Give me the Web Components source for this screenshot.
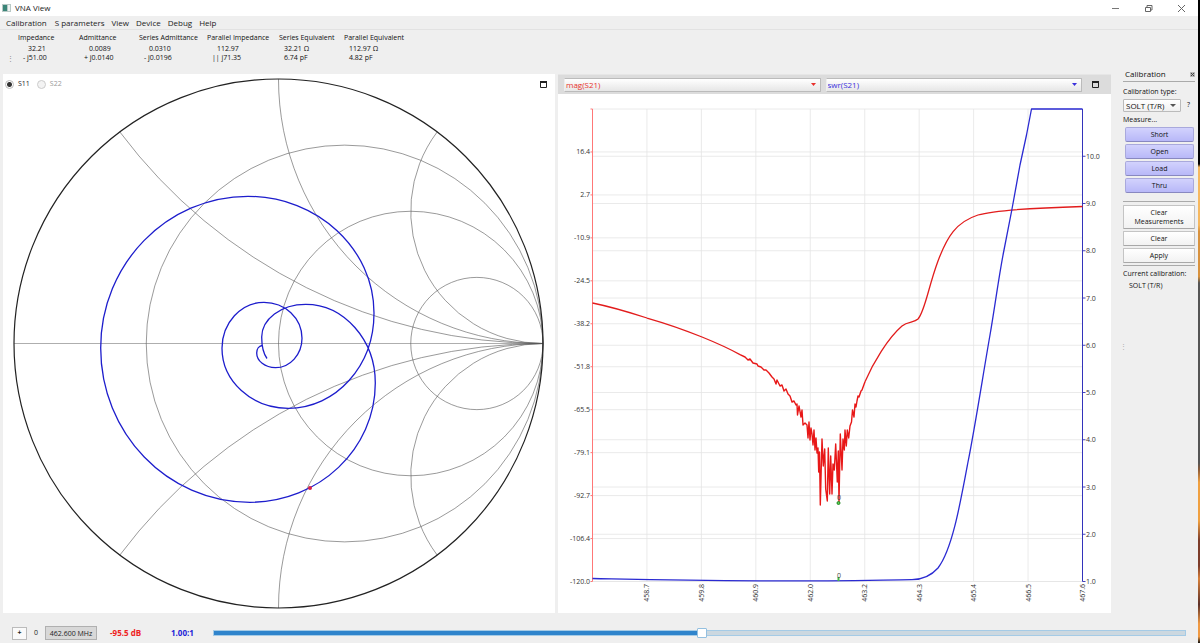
<!DOCTYPE html>
<html lang="en">
<head>
<meta charset="utf-8">
<title>VNA View</title>
<style>
  body { margin: 0; background: #efefef; }
</style>
</head>
<body>
<vna-app></vna-app>
<script>
const BASE = `
  *, *::before, *::after { box-sizing: border-box; }
  :host { display: block; }
  button, input, select { font: inherit; color: inherit; margin: 0; }
  button { padding: 0; border: 0; background: none; white-space: nowrap; }
  svg { display: block; }
`;

function define(name, css, html) {
  customElements.define(name, class extends HTMLElement {
    constructor() {
      super();
      const root = this.attachShadow({ mode: 'open' });
      const t = document.createElement('template');
      t.innerHTML = `<style>${BASE}${css}</style>${html}`;
      root.append(t.content.cloneNode(true));
    }
  });
}

/* ---------- title bar ---------- */
define('vna-titlebar', `
  :host { background: #fff; height: 16px; display: flex; align-items: center; padding-left: 2px; color: #222; }
  h1 { font-size: 8px; line-height: 16px; font-weight: 400; margin: 0 auto 0 4px; }
  button { width: 33px; height: 16px; display: grid; place-items: center; }
`, `
  <svg width="9" height="8" viewBox="0 0 9 8" aria-hidden="true">
    <rect width="9" height="8" fill="#b9c9c6"/><rect x="1" y="1" width="4" height="6" fill="#3b8578"/>
    <rect x="6" y="1" width="2" height="6" fill="#eef3f2"/></svg>
  <h1>VNA View</h1>
  <button aria-label="Minimize"><svg width="9" height="9"><path d="M1 4.5H8" stroke="#777"/></svg></button>
  <button aria-label="Restore"><svg width="9" height="9" fill="none" stroke="#666"><path d="M1.5 3.5h5v4h-5zM3 3.5v-2h5v4.5h-1.5"/></svg></button>
  <button aria-label="Close"><svg width="9" height="9" fill="none" stroke="#666"><path d="M1 1l7 7M8 1l-7 7"/></svg></button>
`);

/* ---------- menu bar ---------- */
define('vna-menubar', `
  nav { display: flex; gap: 8px; height: 14px; padding: 0 6px; border-bottom: 1px solid #e2e2e2; font-size: 8px; line-height: 14px; color: #222; }
  button:nth-child(n+3) { margin-left: -1px; }
`, `<nav aria-label="Main menu">${['Calibration', 'S parameters', 'View', 'Device', 'Debug', 'Help'].map(m => `<button>${m}</button>`).join('')}</nav>`);

/* ---------- marker readout ---------- */
const READOUT = [
  ['Impedance', '32.21', '- j51.00', 61], ['Admittance', '0.0089', '+ j0.0140', 60],
  ['Series Admittance', '0.0310', '- j0.0196', 68], ['Parallel Impedance', '112.97', '|| j71.35', 72],
  ['Series Equivalent', '32.21 Ω', '6.74 pF', 65], ['Parallel Equivalent', '112.97 Ω', '4.82 pF', 70]];
define('vna-readout', `
  :host { height: 44px; padding: 3px 0 0 7px; display: flex; align-items: flex-start; color: #111; }
  .grip { width: 11px; font-size: 7px; line-height: 9px; padding-top: 21px; color: #888; }
  table { border-collapse: collapse; table-layout: fixed; width: 396px; font-size: 7px; line-height: 9px; }
  th, td { padding: 0; text-align: left; font-weight: 400; white-space: nowrap; }
  th { height: 11px; vertical-align: top; }
  td { padding-left: 5px; }
  tr.real td:nth-child(-n+4) { padding-left: 10px; }
`, `<span class="grip" aria-hidden="true">⋮</span>
  <table><colgroup>${READOUT.map(r => `<col style="width:${r[3]}px">`).join('')}</colgroup>
  <thead><tr>${READOUT.map(r => `<th scope="col">${r[0]}</th>`).join('')}</tr></thead>
  <tbody><tr class="real">${READOUT.map(r => `<td>${r[1]}</td>`).join('')}</tr>
  <tr>${READOUT.map(r => `<td>${r[2]}</td>`).join('')}</tr></tbody></table>`);

/* ---------- Smith chart ---------- */
function smithGrid() {
  const cx = 278.5, cy = 343.5, R = 264.5, end = cx + R;
  let s = `<path d="M${cx - R} ${cy}H${end}" stroke="#777"/>`;
  for (const r of [1 / 3, 1, 3])
    s += `<circle cx="${cx + R * r / (1 + r)}" cy="${cy}" r="${R / (1 + r)}"/>`;
  for (const x of [0.5, 1, 2]) {
    const d = x * x + 1, px = cx + R * (x * x - 1) / d, py = R * 2 * x / d, rad = R / x;
    s += `<path d="M${px} ${cy - py}A${rad} ${rad} 0 0 0 ${end} ${cy}"/><path d="M${px} ${cy + py}A${rad} ${rad} 0 0 1 ${end} ${cy}"/>`;
  }
  return `<g fill="none" stroke="#555" stroke-width=".6">${s}</g>
    <circle cx="${cx}" cy="${cy}" r="${R}" fill="none" stroke="#222" stroke-width="1.2"/>`;
}
define('smith-chart', `
  :host { background: #fff; display: grid; align-content: start; min-width: 0; }
  svg.chart, .bar { grid-area: 1 / 1; }
  svg.chart { width: 100%; height: auto; }
  .bar { display: flex; align-items: center; height: 20px; padding: 0 6px 0 2px; align-self: start; font-size: 7px; line-height: 10px; }
  label { display: flex; align-items: center; gap: 4px; margin-right: 7px; color: #222; }
  label.off { color: #999; }
  input { appearance: none; width: 9px; height: 9px; border: 1px solid #bbb; border-radius: 50%; background: #fff; }
  input:checked { background: radial-gradient(circle, #333 0 2px, #fff 3px); }
  input:disabled { background: #f3f3f3; border-color: #ccc; }
  button { margin-left: auto; width: 11px; height: 11px; display: grid; place-items: center; }
`, `
  <svg class="chart" viewBox="3 74 552 539" role="img" aria-label="Smith chart of S11">
    ${smithGrid()}
    <path fill="none" stroke="#1d1dcc" stroke-width="1.3" d="M267 358.5C263 353 261.7 345 261.7 337C261.7 319 281 304.3 305.7 304.3C344 304.3 375.3 340 375.3 383C375.3 449 319 502.3 250 502.3C167 502.3 100.7 433 100.7 348C100.7 264 167 196.3 248 196.3C317.5 196.3 374 249 374 313C374 366 336 408.3 288.3 408.3C251.5 408.3 222 381 222 348.3C222 323 241 302.3 264 302.3C285 302.3 302 318 302 338.3C302 354.5 290 367.7 275.5 367.7C265 367.7 256.7 361 256.7 353C256.7 349 259 346 262 345.5"/>
    <circle cx="310" cy="488" r="2" fill="#d8204a"/>
  </svg>
  <div class="bar">
    <label><input type="radio" name="port" checked>S11</label>
    <label class="off"><input type="radio" name="port" disabled>S22</label>
    <button aria-label="Maximize chart"><svg width="7" height="7"><path d="M.5 1h6v5.5h-6z" fill="none" stroke="#222"/><path d="M0 1h7" stroke="#222" stroke-width="2"/></svg></button>
  </div>`);

/* ---------- rectangular plot ---------- */
const L = 592.5, Rt = 1082.5, T = 109, B = 581.5;
function axes() {
  let grid = '', ticks = '';
  const lv = ['', '16.4', '2.7', '-10.9', '-24.5', '-38.2', '-51.8', '-65.5', '-79.1', '-92.7', '-106.4', '-120.0'];
  lv.forEach((v, i) => {
    const y = T + i * (B - T) / 11;
    grid += `<path d="M${L} ${y}H${Rt}"/>`;
    ticks += `<path d="M${L - 2} ${y}h2" stroke="#f77"/><text x="590" y="${y + 2.5}" text-anchor="end">${v}</text>`;
  });
  for (let k = 1; k <= 10; k++) {
    const y = B - (k - 1) * 47.25;
    grid += `<path d="M${L} ${y}H${Rt}"/>`;
    ticks += `<path d="M${Rt} ${y}h3" stroke="#44b"/><text x="1086" y="${y + 2.5}">${k}.0</text>`;
  }
  ['458.7', '459.8', '460.9', '462.0', '463.2', '464.3', '465.4', '466.5', '467.6'].forEach((v, i) => {
    const x = L + (i + 1) * (Rt - L) / 9;
    grid += `<path d="M${x} ${T}V${B}"/>`;
    ticks += `<text transform="translate(${x + 2.5} 584) rotate(-90)" text-anchor="end">${v}</text>`;
  });
  return `<g stroke="#e4e4e4" stroke-width=".8">${grid}</g><g font-size="7" fill="#333">${ticks}</g>
    <path d="M${L} ${T}V${B}" stroke="#f77"/><path d="M${Rt} ${T}V${B}" stroke="#33b"/>`;
}
const NOISE = '740,354.6 745,357 748,360 750,359 753,363 757,364 758,366 761,367 764,370 766,370 769,373 772,377 774,379 776,384 777,380 780,386 782,385 784,391 786,389 788,394 790,396 792,402 794,401 796,405 797,404 797.5,415 799,406 801,417 802,410 803,425 805,423 807,425 808,438 809,422 810,440 811,428 812,434 813,445 814,430 815,450 816,438 817,453 818,448 818.7,472 819.5,452 820.3,505 822,439 823.3,466 824.7,449 825.7,489 827.3,501 828.3,448 829.7,494 830.7,456 832,494 833,464 834.3,470 835.7,444 837.3,482 838.3,451 839,502 840.3,434 842,470 843,439 844.3,450 845,430 846.3,446 847.3,430 848.7,438 850,426 851.5,422 852.5,410 854,417 855,404 856,407 857,401 858,396 859,397 861,391 862,390 865,381.7';
define('vna-plot', `
  :host { background: #fff; min-width: 0; }
  .bar { background: #dcdcdc; height: 20px; display: grid; grid-template-columns: 1fr 1fr 24px; column-gap: 5px; padding-left: 6px; align-items: center; border-top: 1px solid #e6e6e6; }
  .pick { display: grid; align-items: center; min-width: 0; }
  .pick > * { grid-area: 1 / 1; }
  .pick svg { justify-self: end; margin-right: 5px; pointer-events: none; fill: currentColor; }
  select { appearance: none; width: 100%; height: 14px; padding: 0 1px; border: 1px solid #bbb; border-left-color: #eee; border-radius: 1px; background: linear-gradient(#fff, #e6e6e6); font-size: 8px; line-height: 12px; }
  .red { color: #e8302c; } .blue { color: #3a30dc; }
  button { width: 17px; height: 14px; display: grid; place-items: center; }
  svg.chart { width: 100%; height: auto; }
`, `
  <div class="bar">
    <div class="pick red"><select aria-label="Left axis trace"><option>mag(S21)</option></select><svg width="5" height="3"><path d="M0 0h5L2.5 3z"/></svg></div>
    <div class="pick blue"><select aria-label="Right axis trace"><option>swr(S21)</option></select><svg width="5" height="3"><path d="M0 0h5L2.5 3z"/></svg></div>
    <button aria-label="Maximize plot"><svg width="7" height="7"><path d="M.5 1h6v5.5h-6z" fill="none" stroke="#222"/><path d="M0 1h7" stroke="#222" stroke-width="2"/></svg></button>
  </div>
  <svg class="chart" viewBox="558 94 553 519" role="img" aria-label="S21 magnitude and SWR against frequency">
    ${axes()}
    <g fill="none" stroke-linejoin="round">
      <path stroke="#e21c1c" stroke-width="1.3" d="M592.5 303C612 307 630 312.5 647 318C668 324 685 330 702 337C718 343.5 728 348 740 354.6"/>
      <polyline stroke="#e81818" stroke-width="1.4" points="${NOISE}"/>
      <path stroke="#e21c1c" stroke-width="1.3" d="M865 381.7C873 363 888 338 902 326C908 321 914 323 918 319C925 311 928 288 938 261C947 237 956 222 978 215C993 210.5 1030 208 1082.5 206.5"/>
      <path stroke="#2a2ad2" stroke-width="1.3" d="M592.5 578.5C640 579.5 680 580.6 760 580.9C830 581.2 880 580 912 579.7C922 579.5 930 577 938 568C952 550 960 505 968 462C975 427 983 375 990 335C995 306 999 275 1004 250L1012 209L1020 165L1026.500 135L1031.5 109H1082.5"/>
    </g>
    <g font-size="7" fill="#444" text-anchor="middle">
      <circle cx="838.5" cy="503" r="1.5" fill="#5c5" stroke="#282"/><text x="839" y="500">0</text>
      <path d="M838.5 577v4" stroke="#4b4" stroke-width="2"/><text x="839" y="578">0</text>
    </g>
  </svg>`);

/* ---------- push button ---------- */
define('vna-button', `
  button { width: 100%; min-height: 15px; border: 1px solid #c4c4c4; border-bottom-color: #a8a8a8; border-radius: 1px; background: linear-gradient(#fff, #f2f2f2); font-size: 7px; line-height: 9px; padding: 2px 0; color: #111; white-space: normal; }
  :host([tone=measured]) button { background: linear-gradient(#d2d2fd, #b8b8f8); border-color: #a9a9dc; border-bottom-color: #8888c0; border-radius: 2px; }
`, `<button><slot></slot></button>`);

/* ---------- calibration dock ---------- */
define('calibration-dock', `
  :host { padding: 37px 3px 0 10px; color: #111; font-size: 7px; line-height: 10px; display: grid; grid-template-columns: 2px minmax(0, 1fr); }
  .splitter { font-size: 7px; align-self: center; color: #aaa; padding-top: 14px; margin-left: -1px; }
  header { display: flex; justify-content: space-between; align-items: center; height: 15px; border-bottom: 1px solid #aaa; padding-left: 2px; }
  h2 { margin: 0; font-size: 8px; line-height: 12px; font-weight: 400; }
  header button { width: 5px; height: 12px; display: grid; place-items: center; }
  .kind { display: grid; padding-top: 5px; white-space: nowrap; }
  .row { display: flex; align-items: center; gap: 6px; height: 14px; margin-top: 1px; }
  .pick { display: grid; align-items: center; width: 58px; }
  .pick > * { grid-area: 1 / 1; }
  .pick svg { justify-self: end; margin-right: 5px; pointer-events: none; fill: #555; }
  select { appearance: none; width: 100%; height: 13px; padding: 0 2px; border: 1px solid #bbb; border-radius: 1px; background: linear-gradient(#fff, #f0f0f0); font-size: 8px; line-height: 11px; }
  p { margin: 0; white-space: nowrap; }
  .measure { margin-top: 3px; }
  .steps { display: grid; gap: 2px; padding: 2px 1px 8px 2px; }
  .actions { display: grid; gap: 2px; border: solid #aaa; border-width: 1px 0; padding: 3px 0 2px; }
  .current { padding-top: 3px; } .value { padding-left: 6px; line-height: 13px; }
`, `
  <span class="splitter" aria-hidden="true">⋮</span>
  <div>
    <header><h2>Calibration</h2><button aria-label="Close panel"><svg width="5" height="5"><rect width="5" height="5" fill="#bbb"/><path d="M1 1l3 3M4 1l-3 3" stroke="#444"/></svg></button></header>
    <div class="kind"><label for="kind">Calibration type:</label>
      <div class="row"><div class="pick"><select id="kind"><option>SOLT (T/R)</option></select><svg width="6" height="3"><path d="M0 0h6L3 3z"/></svg></div><button aria-label="Help">?</button></div></div>
    <p class="measure">Measure...</p>
    <div class="steps">${['Short', 'Open', 'Load', 'Thru'].map(s => `<vna-button tone="measured">${s}</vna-button>`).join('')}</div>
    <div class="actions"><vna-button>Clear<br>Measurements</vna-button><vna-button>Clear</vna-button><vna-button>Apply</vna-button></div>
    <p class="current">Current calibration:</p>
    <p class="value">SOLT (T/R)</p>
  </div>`);

/* ---------- marker bar ---------- */
define('marker-bar', `
  :host { display: flex; align-items: center; height: 30px; padding: 10px 12px 0 12px; font-size: 7px; line-height: 10px; color: #222; }
  .add { width: 15px; height: 13px; border: 1px solid #bbb; background: #fafafa; font-weight: 700; }
  .idx { width: 18px; text-align: center; }
  .freq { width: 52px; height: 14px; border: 1px solid #b0b0b0; background: #d8d8d8; text-align: center; padding: 0; }
  output { font-weight: 700; font-size: 8px; white-space: nowrap; }
  .db { color: #ee2222; width: 61px; margin-left: 13px; }
  .swr { color: #2222d8; width: 42px; }
  input[type=range] { appearance: none; flex: 1; min-width: 0; height: 12px; background: none; }
  input[type=range]::-webkit-slider-runnable-track { height: 6px; border: 1px solid #a5cbe6; background: linear-gradient(90deg, #2f84cc 50.25%, #ccd8e0 50.25%); }
  input[type=range]::-webkit-slider-thumb { appearance: none; width: 10px; height: 10px; margin-top: -3px; background: #fff; border: 1px solid #94c0e0; border-radius: 1px; }
`, `
  <button class="add" aria-label="Add marker">+</button><span class="idx">0</span>
  <input class="freq" type="text" value="462.600 MHz" aria-label="Marker frequency">
  <output class="db">-95.5 dB</output><output class="swr">1.00:1</output>
  <input type="range" min="0" max="1000" value="503" aria-label="Marker position">`);

/* ---------- window ---------- */
define('vna-app', `
  :host { display: grid; grid-template-columns: minmax(0, 1fr) 2px; min-height: 100vh; background: #efefef; font-family: "Open Sans", "Noto Sans", sans-serif; }
  .body { display: grid; grid-template-columns: minmax(0, 1fr) 87px; }
  .charts { display: grid; grid-template-columns: minmax(0, 552fr) minmax(0, 553fr); gap: 3px; padding-left: 3px; }
  .desk { background: linear-gradient(#000 0 25.5%, #f6b860 26% 35%, #d8923e 36% 43%, #555 44% 72%, #8a5a38 73%, #f0a040 75% 81%, #7c3c2a 84% 88%, #d8803a 90%, #5c3028 94%, #f09a44 97% 99%, #111); }
`, `
  <div><vna-titlebar></vna-titlebar><vna-menubar></vna-menubar>
    <div class="body"><main><vna-readout></vna-readout><div class="charts"><smith-chart></smith-chart><vna-plot></vna-plot></div></main>
    <calibration-dock></calibration-dock></div>
    <marker-bar></marker-bar></div>
  <div class="desk"></div>`);
</script>
</body>
</html>
